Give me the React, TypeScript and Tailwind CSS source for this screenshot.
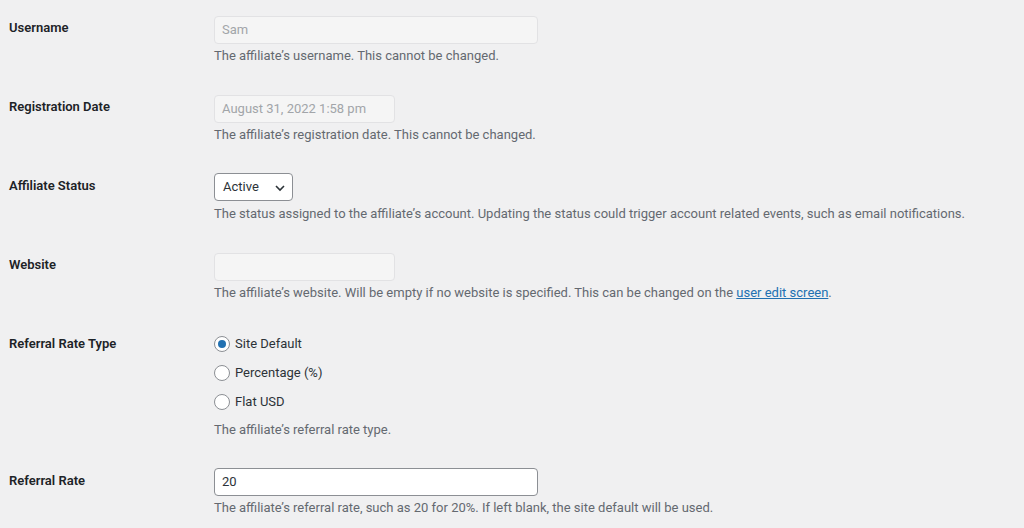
import React from "react";

const font = { fontFamily: "Roboto, 'Liberation Sans', sans-serif" };

function Row({ label, children, pt = "pt-4" }: { label: string; children: React.ReactNode; pt?: string }) {
  return (
    <div className={`flex ${pt} pb-[14px]`}>
      <div className="w-[214px] shrink-0 pl-[9px] pt-[3px] text-[13px] leading-[18px] font-semibold text-[#1d2327]">
        {label}
      </div>
      <div className="flex flex-col items-start">{children}</div>
    </div>
  );
}

function Desc({ children, className = "mt-[3px]" }: { children: React.ReactNode; className?: string }) {
  return <p className={`${className} text-[13px] leading-[18px] text-[#646970]`}>{children}</p>;
}

function Disabled({ value, w }: { value: string; w: string }) {
  return (
    <div
      className={`${w} h-[28px] rounded-[4px] border border-[#e2e2e4] bg-[#f5f5f5] px-[7px] flex items-center text-[13px] text-[#a2a5a9]`}
    >
      {value}
    </div>
  );
}

function Radio({ checked, label }: { checked?: boolean; label: string }) {
  return (
    <div className="h-[29px] flex items-center">
      <span className="w-[16px] h-[16px] rounded-full border border-[#8c8f94] bg-white flex items-center justify-center">
        {checked && <span className="w-[8px] h-[8px] rounded-full bg-[#2271b1]" />}
      </span>
      <span className="ml-[5px] text-[13px] text-[#2c3338]">{label}</span>
    </div>
  );
}

export default function App() {
  return (
    <div className="w-[1024px] h-[528px] overflow-hidden bg-[#f0f0f1]" style={font}>
      <Row label="Username">
        <Disabled value="Sam" w="w-[324px]" />
        <Desc>The affiliate’s username. This cannot be changed.</Desc>
      </Row>
      <Row label="Registration Date">
        <Disabled value="August 31, 2022 1:58 pm" w="w-[181px]" />
        <Desc>The affiliate’s registration date. This cannot be changed.</Desc>
      </Row>
      <Row label="Affiliate Status">
        <div className="-mt-[1px] w-[79px] h-[28px] rounded-[4px] border border-[#8c8f94] bg-white pl-[8px] pr-[6px] flex items-center justify-between text-[13px] text-[#2c3338]">
          <span className="-mt-[1px]">Active</span>
          <svg width="12" height="8" viewBox="0 0 12 8" className="mt-[2px]">
            <path d="M2 2 L6 6 L10 2" fill="none" stroke="#2c3338" strokeWidth="1.6" />
          </svg>
        </div>
        <Desc className="mt-[4px]">
          The status assigned to the affiliate’s account. Updating the status could trigger account related events, such as
          email notifications.
        </Desc>
      </Row>
      <Row label="Website">
        <Disabled value="" w="w-[181px]" />
        <Desc>
          The affiliate’s website. Will be empty if no website is specified. This can be changed on the{" "}
          <a className="text-[#2271b1] underline">user edit screen</a>.
        </Desc>
      </Row>
      <Row label="Referral Rate Type">
        <div className="-mt-[3px]">
          <Radio checked label="Site Default" />
          <Radio label="Percentage (%)" />
          <Radio label="Flat USD" />
        </div>
        <Desc className="mt-[5px]">The affiliate’s referral rate type.</Desc>
      </Row>
      <Row label="Referral Rate">
        <div className="-mt-[1px] w-[324px] h-[28px] rounded-[4px] border border-[#8c8f94] bg-white px-[7px] flex items-center text-[13px] text-[#2c3338]">
          20
        </div>
        <Desc>The affiliate’s referral rate, such as 20 for 20%. If left blank, the site default will be used.</Desc>
      </Row>
    </div>
  );
}
